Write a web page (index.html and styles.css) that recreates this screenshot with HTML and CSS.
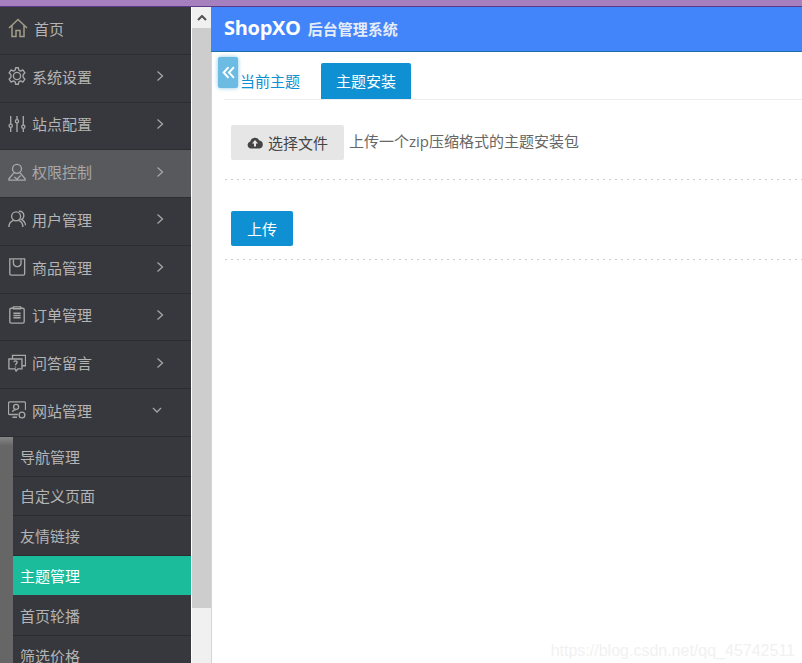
FILE: index.html
```html
<!DOCTYPE html>
<html lang="zh-CN">
<head>
    <meta charset="UTF-8">
    <title>ShopXO 后台管理系统</title>
    <link rel="stylesheet" href="styles.css">
</head>
<body>
    <div class="topstrip"></div>
    <div class="layout">
        <nav class="sidebar">
            <a class="nav-item">
                <svg class="nav-icon home-icon" viewBox="0 0 20 20"><path d="M1 10 10 1.500 19 10M4 7.500V18.500H8V12.500H12V18.500H16V7.500"/></svg>
                <span class="nav-label">首页</span>
            </a>
            <a class="nav-item">
                <svg class="nav-icon" viewBox="0 0 20 20"><circle cx="10" cy="10" r="4"/><path stroke-linejoin="round" d="M8.500 .8H11.500L12 3.500 14 4.500 16.500 3.200 18.800 6.500 16.800 8.500V11.500L18.800 13.500 16.500 16.800 14 15.500 12 16.500 11.500 19.200H8.500L8 16.500 6 15.500 3.500 16.800 1.200 13.500 3.200 11.500V8.500L1.200 6.500 3.500 3.200 6 4.500 8 3.500Z"/></svg>
                <span class="nav-label">系统设置</span>
                <svg class="chevron" viewBox="0 0 8 10"><path d="M1.500 .5 6.500 5 1.500 9.500"/></svg>
            </a>
            <a class="nav-item">
                <svg class="nav-icon" viewBox="0 0 20 20"><path d="M3 1V10M3 14V19M10 1V5M10 9V19M17 1V11M17 15V19"/><circle cx="3" cy="12" r="1.800"/><circle cx="10" cy="7" r="1.800"/><circle cx="17" cy="13" r="1.800"/></svg>
                <span class="nav-label">站点配置</span>
                <svg class="chevron" viewBox="0 0 8 10"><path d="M1.500 .5 6.500 5 1.500 9.500"/></svg>
            </a>
            <a class="nav-item nav-item-hover">
                <svg class="nav-icon" viewBox="0 0 20 20"><circle cx="10" cy="6.500" r="5"/><path d="M6.500 11 1 17.500V19H19V17.500L13.500 11M7 15.500 10 18 14 14"/></svg>
                <span class="nav-label">权限控制</span>
                <svg class="chevron" viewBox="0 0 8 10"><path d="M1.500 .5 6.500 5 1.500 9.500"/></svg>
            </a>
            <a class="nav-item">
                <svg class="nav-icon" viewBox="0 0 20 20"><circle cx="9" cy="7" r="5"/><path d="M1 19C1 15 3.500 12.500 6 11.500M12 11.500C14.500 12.500 16.500 15 16.500 19M12 1.500C15.500 1 18 3.500 17.500 7 17.300 8.500 16.500 10 15 10.500 17.500 12 19.500 14.500 19.500 17"/></svg>
                <span class="nav-label">用户管理</span>
                <svg class="chevron" viewBox="0 0 8 10"><path d="M1.500 .5 6.500 5 1.500 9.500"/></svg>
            </a>
            <a class="nav-item">
                <svg class="nav-icon" viewBox="0 0 20 20"><path d="M2 1H18.500V17.500A1.500 1.500 0 0 1 17 19H3.500A1.500 1.500 0 0 1 2 17.500ZM6 2V5C6 11 14.500 11 14.500 5V2"/></svg>
                <span class="nav-label">商品管理</span>
                <svg class="chevron" viewBox="0 0 8 10"><path d="M1.500 .5 6.500 5 1.500 9.500"/></svg>
            </a>
            <a class="nav-item">
                <svg class="nav-icon" viewBox="0 0 20 20"><path d="M6 2.500H3.500A1.500 1.500 0 0 0 2 4V17.500A1.500 1.500 0 0 0 3.500 19H16.500A1.500 1.500 0 0 0 18 17.500V4A1.500 1.500 0 0 0 16.500 2.500H14M6 1H14V3H6ZM6 8H14M6 10.500H14M6 13H14"/></svg>
                <span class="nav-label">订单管理</span>
                <svg class="chevron" viewBox="0 0 8 10"><path d="M1.500 .5 6.500 5 1.500 9.500"/></svg>
            </a>
            <a class="nav-item">
                <svg class="nav-icon" viewBox="0 0 20 20"><path d="M5 5V1.500H19.500V13H16M1 5.500H15.500V16.500H11L9 19 8 16.500H1ZM6.500 9C7 7 10.500 7.500 10 9.500 9.700 10.800 8.300 10.800 8.300 12.500M8.300 14V15"/></svg>
                <span class="nav-label">问答留言</span>
                <svg class="chevron" viewBox="0 0 8 10"><path d="M1.500 .5 6.500 5 1.500 9.500"/></svg>
            </a>
            <a class="nav-item nav-item-open">
                <svg class="nav-icon" viewBox="0 0 20 20"><path d="M11 15H2A1.500 1.500 0 0 1 .5 13.500V2.500A1.500 1.500 0 0 1 2 1H18A1.500 1.500 0 0 1 19.500 2.500V10M5 18H10"/><circle cx="9" cy="6.500" r="2.800"/><path d="M5 12C5.500 10 7 9.500 9 9.500"/><circle cx="15.500" cy="15.500" r="3.200"/></svg>
                <span class="nav-label">网站管理</span>
                <svg class="chevron-down" viewBox="0 0 10 8"><path d="M1 2 5 6 9 2"/></svg>
            </a>
            <div class="submenu">
                <a class="sub-item">导航管理</a>
                <a class="sub-item">自定义页面</a>
                <a class="sub-item">友情链接</a>
                <a class="sub-item sub-item-active">主题管理</a>
                <a class="sub-item">首页轮播</a>
                <a class="sub-item">筛选价格</a>
            </div>
        </nav>

        <div class="scrollbar">
            <div class="scroll-btn"><svg viewBox="0 0 10 6"><path d="M1 5 5 1 9 5"/></svg></div>
            <div class="scroll-thumb"></div>
        </div>

        <div class="main">
            <header class="header">
                <span class="brand">ShopXO</span>
                <span class="brand-sub">后台管理系统</span>
            </header>
            <div class="content">
                <div class="collapse-btn">
                    <svg viewBox="0 0 12 12"><path d="M6 1 1.500 6 6 11M11 1 6.500 6 11 11"/></svg>
                </div>
                <div class="tabs">
                    <a class="tab">当前主题</a>
                    <a class="tab tab-active">主题安装</a>
                </div>
                <div class="form-row file-row">
                    <button class="btn btn-file">
                        <svg class="cloud-icon" viewBox="0 0 16 13"><path d="M4 12.500A3.500 3.500 0 0 1 3.300 5.600 4.800 4.800 0 0 1 12.400 4.600 4 4 0 0 1 12.500 12.500Z"/><path class="cloud-arrow" d="M8 4 11 7.500H9V10.500H7V7.500H5Z"/></svg>
                        选择文件
                    </button>
                    <span class="file-tip">上传一个zip压缩格式的主题安装包</span>
                </div>
                <div class="form-row submit-row">
                    <button class="btn btn-primary">上传</button>
                </div>
                <div class="watermark">https://blog.csdn.net/qq_45742511</div>
            </div>
        </div>
    </div>
</body>
</html>
```

FILE: styles.css
```css
* {
    box-sizing: border-box;
}
html, body {
    height: 100%;
}
body {
    margin: 0;
    overflow: hidden;
    background: #fff;
    font-family: "Open Sans", "Noto Sans CJK SC", sans-serif;
    font-size: 15px;
    color: #555;
}
.topstrip {
    height: 7px;
    background: #a67fbf;
    border-bottom: 1px solid #5c3a86;
}
.layout {
    display: flex;
    height: 656px;
}

/* sidebar */
.sidebar {
    width: 191px;
    flex: none;
    background: #37383d;
    overflow: hidden;
}
.nav-item {
    display: flex;
    align-items: center;
    height: 47.75px;
    padding: 0 27px 4px 8px;
    border-bottom: 1px solid #2c2d31;
    color: #b4b4b4;
}
.nav-item:first-child .nav-label {
    margin-left: 6px;
}
.nav-item-hover {
    background: #58595c;
    color: #a8a8a8;
}
.nav-icon {
    width: 18px;
    height: 18px;
    margin-right: 6px;
    flex: none;
    fill: none;
    stroke: #a8a8a8;
    stroke-width: 1.5;
}
.home-icon {
    width: 20px;
    height: 20px;
    stroke: #a39c88;
    margin-right: 0;
}
.nav-label {
    flex: 1;
    white-space: nowrap;
}
.chevron {
    width: 8px;
    height: 10px;
    fill: none;
    stroke: #a5a5a5;
    stroke-width: 1.3;
}
.chevron-down {
    width: 10px;
    height: 8px;
    margin-right: 2px;
    fill: none;
    stroke: #a5a5a5;
    stroke-width: 1.3;
}
.submenu {
    border-left: 13px solid #666;
    border-image: linear-gradient(#8a8a8a, #666 10px) 1;
}
.sub-item {
    display: flex;
    align-items: center;
    height: 39.8px;
    padding-left: 7px;
    border-bottom: 1px solid #2c2d31;
    color: #b4b4b4;
}
.sub-item-active {
    background: #1abc9c;
    color: #fff;
    border-bottom-color: #37383d;
}

/* scrollbar between sidebar and main */
.scrollbar {
    width: 20px;
    flex: none;
    background: #f0f0f0;
    border-left: 1px solid #fff;
}
.scroll-btn {
    display: flex;
    align-items: center;
    justify-content: center;
    height: 21px;
}
.scroll-btn svg {
    width: 10px;
    height: 6px;
    fill: none;
    stroke: #505050;
    stroke-width: 2;
}
.scroll-thumb {
    height: 580px;
    background: #cdcdcd;
}

/* main area */
.main {
    flex: 1;
    min-width: 0;
}
.header {
    display: flex;
    align-items: baseline;
    height: 45px;
    padding: 7px 0 0 13px;
    background: #4285fa;
    border-bottom: 1px solid #1c6fa8;
    color: #fff;
    font-weight: 700;
}
.brand {
    font-size: 20px;
    letter-spacing: -0.3px;
    margin-right: 7px;
}
.brand-sub {
    font-size: 15px;
    color: #e6ecf7;
}
.content {
    position: relative;
    height: 611px;
    padding: 11px 0 0 12px;
    border-left: 1px solid #d4d4d4;
}
.collapse-btn {
    position: absolute;
    left: 6px;
    top: 5px;
    display: flex;
    align-items: center;
    justify-content: center;
    width: 20px;
    height: 31px;
    border-radius: 2px;
    background: #6bbbe3;
    box-shadow: 0 0 4px #8cc8e8;
}
.collapse-btn svg {
    width: 13px;
    height: 13px;
    fill: none;
    stroke: #fff;
    stroke-width: 1.8;
}
.tabs {
    display: flex;
    align-items: flex-end;
    height: 37px;
    border-bottom: 1px solid #eee;
}
.tab {
    display: flex;
    align-items: center;
    height: 36px;
    padding: 0 15px 2px 16px;
    color: #0e90d2;
}
.tab-active {
    margin-left: 6px;
    padding-left: 15px;
    background: #0e90d2;
    color: #fff;
    border-radius: 2px 2px 0 0;
}
.form-row {
    padding-left: 6px;
    margin-left: 1px;
    background: repeating-linear-gradient(90deg, #ccc 0 2px, transparent 2px 6px) bottom / 100% 1px no-repeat;
}
.file-row {
    display: flex;
    align-items: center;
    gap: 5px;
    height: 80px;
    padding-top: 5px;
}
.file-tip {
    margin-top: -4px;
    color: #666;
}
.submit-row {
    height: 80px;
    padding-top: 31px;
}
.btn {
    display: inline-flex;
    align-items: center;
    justify-content: center;
    height: 35px;
    border: 0;
    border-radius: 2px;
    padding: 0;
    font-family: inherit;
    font-size: 15px;
}
.btn-file {
    width: 113px;
    background: #e6e6e6;
    color: #444;
}
.cloud-icon {
    width: 16px;
    height: 13px;
    margin-right: 5px;
    fill: #444;
}
.cloud-arrow {
    fill: #e6e6e6;
}
.btn-primary {
    width: 62px;
    background: #0e90d2;
    color: #fff;
}
.watermark {
    position: absolute;
    right: 7px;
    bottom: 3px;
    font-family: "Liberation Sans", sans-serif;
    font-size: 16px;
    color: #f1f1f1;
}
```
